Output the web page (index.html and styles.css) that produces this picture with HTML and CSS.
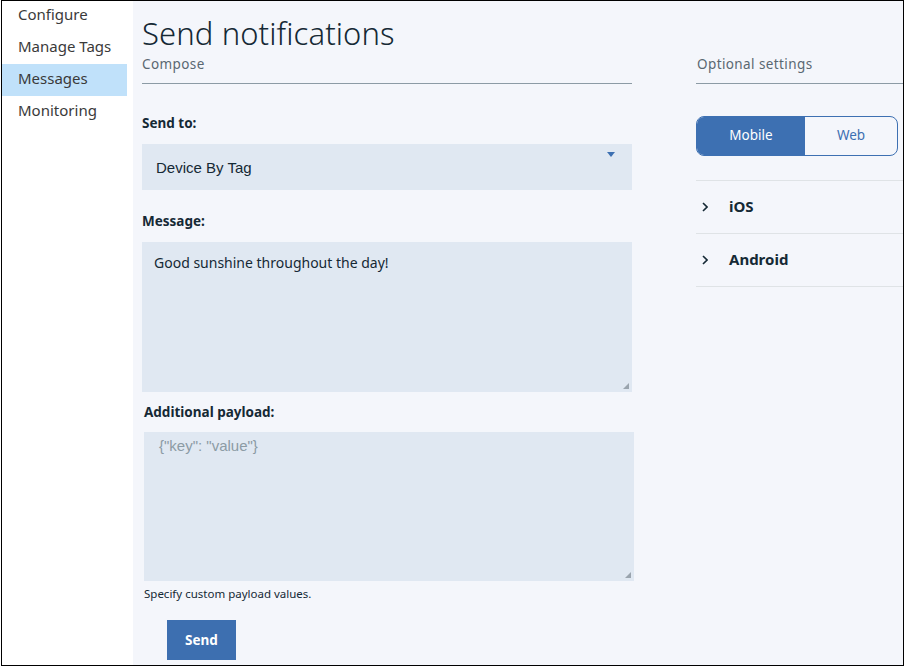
FILE: index.html
```html
<!DOCTYPE html>
<html>
<head>
<meta charset="utf-8">
<link rel="stylesheet" href="styles.css">
</head>
<body>
<div class="frame">
  <nav class="sidebar">
    <div class="nav-item">Configure</div>
    <div class="nav-item">Manage Tags</div>
    <div class="nav-item active">Messages</div>
    <div class="nav-item">Monitoring</div>
  </nav>
  <main class="content">
    <section class="compose">
      <h1 class="title">Send notifications</h1>
      <div class="section-head">Compose</div>
      <label class="label send-label">Send to:</label>
      <div class="select">
        <span>Device By Tag</span>
        <svg class="caret" width="8" height="5" viewBox="0 0 8 5"><path d="M0 0H8L4 5Z" fill="#3d70b2"/></svg>
      </div>
      <label class="label msg-label">Message:</label>
      <div class="textarea message">Good sunshine throughout the day!<span class="grip"></span></div>
      <div class="payload">
        <label class="label payload-label">Additional payload:</label>
        <div class="textarea payload-box"><span class="placeholder">{"key": "value"}</span><span class="grip"></span></div>
        <div class="helper">Specify custom payload values.</div>
      </div>
      <button class="send">Send</button>
    </section>
    <section class="optional">
      <div class="section-head opt-head">Optional settings</div>
      <div class="toggle">
        <div class="seg on">Mobile</div>
        <div class="seg">Web</div>
      </div>
      <div class="acc-list">
        <div class="acc"><svg class="chev" width="6" height="10" viewBox="0 0 6 10"><path d="M1 1L5 5L1 9" fill="none" stroke="#152935" stroke-width="1.6"/></svg><span>iOS</span></div>
        <div class="acc"><svg class="chev" width="6" height="10" viewBox="0 0 6 10"><path d="M1 1L5 5L1 9" fill="none" stroke="#152935" stroke-width="1.6"/></svg><span>Android</span></div>
      </div>
    </section>
  </main>
</div>
</body>
</html>
```
FILE: styles.css
```css
html, body { margin: 0; padding: 0; background: #fff; }
body { font-family: "Noto Sans", "Open Sans", sans-serif; color: #152935; }
.frame {
  margin-left: 1px;
  width: 903px;
  height: 666px;
  box-sizing: border-box;
  border: 1px solid #000;
  display: flex;
  overflow: hidden;
}
.sidebar {
  width: 131px;
  flex: none;
  background: #fff;
}
.nav-item {
  width: 125px;
  height: 32px;
  box-sizing: border-box;
  padding-left: 16px;
  font-size: 15px;
  line-height: 28px;
  color: #3a3a3a;
}
.nav-item:first-child { height: 31px; line-height: 26px; }
.nav-item.active { background: #c0e1fa; }
.content {
  flex: 1;
  background: #f4f6fb;
  display: flex;
  padding-left: 9px;
  min-width: 0;
}
.compose { width: 490px; flex: none; display: flex; flex-direction: column; }
.title {
  margin: 14px 0 0 0;
  font-weight: 300;
  font-size: 31px;
  line-height: 36px;
  color: #152935;
  letter-spacing: 0.1px;
}
.section-head {
  font-size: 13.5px;
  color: #5a6872;
  letter-spacing: 0.4px;
  line-height: 20px;
  margin-top: 3px;
  padding-bottom: 9px;
  border-bottom: 1px solid #8c9ba5;
}
.label {
  display: block;
  font-size: 13.5px;
  font-weight: 700;
  color: #152935;
  line-height: 18px;
}
.send-label { margin-top: 30px; }
.select {
  margin-top: 12px;
  height: 46px;
  background: #e0e8f2;
  display: flex;
  align-items: center;
  padding-left: 14px;
  position: relative;
  font-family: "Liberation Sans", Arial, sans-serif;
  font-size: 15px;
  color: #152935;
}
.select .caret { position: absolute; right: 17px; top: 8px; }
.msg-label { margin-top: 22px; }
.textarea {
  background: #e0e8f2;
  height: 149px;
  box-sizing: border-box;
  position: relative;
  font-size: 14px;
  line-height: 20px;
}
.message { margin-top: 12px; height: 150px; padding: 11px 12px; color: #152935; }
.payload { margin-left: 2px; margin-right: -2px; }
.payload-label { margin-top: 11px; }
.payload-box { margin-top: 11px; padding: 4px 15px; }
.placeholder { font-family: "Liberation Sans", Arial, sans-serif; font-size: 15px; color: #8c9ba5; }
.grip {
  position: absolute; right: 3px; bottom: 3px; width: 6px; height: 6px;
  background:
    radial-gradient(circle, #9aa4ae 0.8px, transparent 1px) 0 0 / 2px 2px;
  clip-path: polygon(100% 0, 100% 100%, 0 100%);
}
.helper { margin-top: 5px; font-size: 11.5px; color: #152935; line-height: 16px; }
.send {
  margin-top: 18px;
  margin-left: 25px;
  width: 69px;
  height: 40px;
  border: 0;
  background: #3d6fb0;
  color: #fff;
  font-family: inherit;
  font-weight: 700;
  font-size: 13.5px;
  padding: 0;
}
.optional { margin-left: 64px; flex: 1; min-width: 207px; display: flex; flex-direction: column; }
.opt-head { margin-top: 53px; padding-left: 1px; }
.toggle {
  margin-top: 32px;
  width: 202px;
  height: 40px;
  box-sizing: border-box;
  border: 1px solid #3d70b2;
  border-radius: 8px;
  overflow: hidden;
  display: flex;
}
.seg {
  flex: 1;
  display: flex; align-items: center; justify-content: center;
  font-size: 13.5px;
  color: #3d70b2;
  padding-bottom: 2px;
}
.seg.on { background: #3d70b2; color: #fff; flex: none; width: 108px; }
.acc-list { margin-top: 24px; border-top: 1px solid #dfe3e6; }
.acc {
  height: 52px;
  box-sizing: content-box;
  border-bottom: 1px solid #dfe3e6;
  display: flex;
  align-items: center;
  font-size: 15px;
  font-weight: 700;
  color: #152935;
}
.acc span { margin-bottom: 3px; }
.chev { margin-left: 6px; margin-right: 21px; }
```
